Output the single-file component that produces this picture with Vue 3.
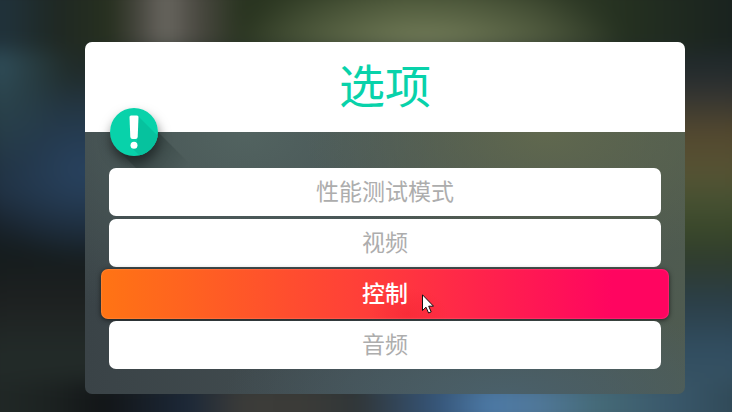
<script setup>
import { ref } from 'vue'

const options = ['性能测试模式', '视频', '控制', '音频']
const active = ref(2)
</script>

<template>
  <main class="screen">
    <div class="backdrop" aria-hidden="true">
      <div class="band top"></div>
      <div class="band left"></div>
      <div class="band right"></div>
      <div class="band bottom"></div>
    </div>
    <section class="panel" aria-labelledby="title">
      <header class="head">
        <h1 id="title">选项</h1>
        <svg class="badge" viewBox="0 0 48 48" aria-hidden="true">
          <defs>
            <clipPath id="disc"><circle cx="24" cy="24" r="24" /></clipPath>
            <linearGradient id="cast" gradientUnits="userSpaceOnUse" x1="34" y1="34" x2="68" y2="68">
              <stop offset="0" stop-color="#1c2a28" stop-opacity="0.4" />
              <stop offset="1" stop-color="#1c2a28" stop-opacity="0" />
            </linearGradient>
          </defs>
          <path d="M48 24 L84 60 H26 L10 44 Z" fill="url(#cast)" />
          <circle cx="24" cy="24" r="24" fill="#08d2aa" />
          <path d="M28 8 L52 32 V52 H34 L21 39 L27 34 Z" fill="#06c29e" clip-path="url(#disc)" />
          <path d="M19.500 9 Q19.500 7.500 21 7.500 H27 Q28.500 7.500 28.500 9 L27.700 29 Q27.500 31 25.500 31 H22.500 Q20.500 31 20.300 29 Z" fill="#fff" />
          <circle cx="24" cy="37.300" r="3.500" fill="#fff" />
        </svg>
      </header>
      <nav class="list">
        <button
          v-for="(option, i) in options"
          :key="option"
          type="button"
          class="item"
          :class="{ active: i === active }"
          @mouseenter="active = i"
        >
          {{ option }}
        </button>
      </nav>
    </section>
    <svg class="pointer" viewBox="0 0 12 20" aria-hidden="true">
      <path d="M0.500 0.800 V16.500 L4 13.200 L6.600 19 L9.200 17.900 L6.700 12.200 H11.500 Z" fill="#fff" stroke="#111" stroke-width="1" />
    </svg>
  </main>
</template>

<style>
body {
  background: #1d2624;
}
</style>

<style scoped>
.screen {
  position: relative;
  box-sizing: border-box;
  min-height: 100vh;
  padding: 42px 47px 18px 85px;
  overflow: hidden;
  font-family: "Noto Sans CJK SC", "Noto Sans", sans-serif;
}

.backdrop {
  position: absolute;
  inset: -20px;
  display: grid;
  grid-template-columns: 1fr 1fr;
  grid-template-rows: 70px 1fr 50px;
  filter: blur(10px);
}

.top {
  grid-column: 1 / 3;
  background:
    radial-gradient(ellipse 200px 80px at 58% 105%, #7c8560 0%, #7c856000 100%),
    linear-gradient(90deg, #20323b 3%, #1f2823 10%, #27301f 17%, #4b4a43 21%, #6b6962 24%, #4b4942 28%, #28331f 34%, #303c25 42%, #39452a 55%, #333e28 72%, #243020 84%, #1a231f 97%);
}

.left {
  background:
    radial-gradient(ellipse 75px 110px at 15px 10px, #304f5c 0%, #304f5c00 100%),
    radial-gradient(ellipse 110px 95px at 105px 120px, #28425f 0%, #28425f00 100%),
    linear-gradient(180deg, #202a25 0%, #213138 22%, #1f2f3f 42%, #18222b 53%, #151c1d 62%, #1d2020 75%, #222a28 90%);
}

.right {
  background: linear-gradient(180deg, #20292b 4%, #303231 12%, #53482f 25%, #565233 36%, #475132 45%, #38462a 55%, #2f3c2f 64%, #2b3e46 75%, #314d60 90%, #365263 100%);
}

.bottom {
  grid-column: 1 / 3;
  background: linear-gradient(90deg, #222a28 0%, #1c2221 9%, #121517 16%, #1c2838 27%, #3c3c39 34%, #3b3b38 42%, #303638 49%, #355477 59%, #4c79a5 66%, #50789a 72%, #456a77 80%, #39576a 90%, #2e4653 100%);
}

.panel {
  position: relative;
  border-radius: 7px;
  background:
    radial-gradient(ellipse 240px 140px at 460px 90px, #60684e 0%, #60684e00 100%),
    radial-gradient(ellipse 280px 90px at 420px 352px, #4a606a 0%, #4a606a00 100%),
    radial-gradient(ellipse 300px 200px at 160px 90px, #526360 0%, #52636000 100%),
    linear-gradient(90deg, #3a4347 0%, #444f52 50%, #4f5b50 100%);
}

.head {
  position: relative;
  display: flex;
  align-items: flex-start;
  justify-content: center;
  height: 90px;
  border-radius: 7px 7px 0 0;
  background: #fff;
}

h1 {
  margin: 0;
  color: #08d2aa;
  font-size: 46px;
  font-weight: 400;
  line-height: 82px;
}

.badge {
  position: absolute;
  left: 25px;
  bottom: -24px;
  width: 48px;
  height: 48px;
  overflow: visible;
  border-radius: 50%;
  box-shadow: 1px 7px 12px #0008;
}

.list {
  position: relative;
  display: flex;
  flex-direction: column;
  gap: 3px;
  padding: 36px 24px 25px;
}

.item {
  height: 48px;
  padding: 0 0 4px;
  border: 0;
  border-radius: 7px;
  background: #fff;
  color: #adadad;
  font-family: inherit;
  font-size: 23px;
  font-weight: 400;
  line-height: 44px;
  cursor: pointer;
}

.item.active {
  height: 50px;
  margin: -1px -8px;
  background:
    radial-gradient(ellipse 40px 26px at 54% 90%, #f0202e66 0%, #f0202e00 100%),
    linear-gradient(90deg, #ff7414 0%, #ff3a3c 50%, #ff0560 90%, #ff0560 100%);
  box-shadow: 0 1px 5px #0009, inset 0 0 1px 1px #ffffff1a;
  color: #fff;
  font-weight: 500;
}

.pointer {
  position: absolute;
  left: 422px;
  top: 294px;
  width: 12px;
  height: 20px;
  pointer-events: none;
}
</style>
